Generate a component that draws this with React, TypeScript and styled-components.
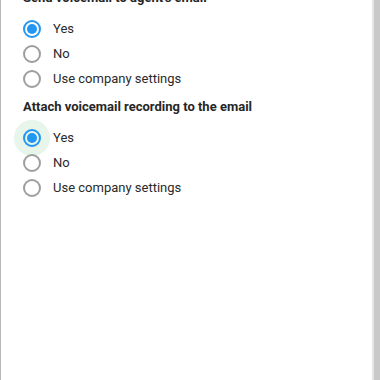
import styled, { createGlobalStyle } from "styled-components";

const Global = createGlobalStyle`
  html, body { margin: 0; padding: 0; background: #fff; }
  body { font-family: Roboto, "Noto Sans", Arial, sans-serif; }
`;

const Page = styled.div`
  width: 380px;
  height: 380px;
  display: flex;
  overflow: hidden;
  background: #fff;
`;

const Panel = styled.div`
  flex: 1;
  border-left: 1px solid #b8b8b8;
  overflow: hidden;
`;

const Rail = styled.div`
  width: 6px;
  background: #c9c9c9;
  border-left: 2px solid #e6e6e6;
`;

const Content = styled.div`
  position: relative;
  z-index: 0;
  margin-top: -10px;
  padding-left: 22px;
  display: flex;
  flex-direction: column;
  gap: 8px;
`;

const Section = styled.div`
  display: flex;
  flex-direction: column;
`;

const Heading = styled.div`
  font-size: 13px;
  line-height: 16px;
  font-weight: 700;
  color: #262626;
  margin-bottom: 10px;
`;

const Row = styled.label`
  height: 25px;
  display: flex;
  align-items: center;
  gap: 12px;
  font-size: 13px;
  color: #2a2a2a;
  cursor: pointer;
`;

const Circle = styled.span<{ $on: boolean; $focus?: boolean }>`
  position: relative;
  width: 18px;
  height: 18px;
  box-sizing: border-box;
  border-radius: 50%;
  border: 2px solid ${(p) => (p.$on ? "#2196f3" : "#9e9e9e")};
  display: flex;
  align-items: center;
  justify-content: center;
  flex-shrink: 0;

  &::before {
    content: "";
    display: ${(p) => (p.$focus ? "block" : "none")};
    position: absolute;
    left: 50%;
    top: 50%;
    width: 36px;
    height: 36px;
    margin: -18px 0 0 -18px;
    border-radius: 50%;
    background: #e7f5ea;
    z-index: -1;
  }

  &::after {
    content: "";
    display: ${(p) => (p.$on ? "block" : "none")};
    width: 10px;
    height: 10px;
    border-radius: 50%;
    background: #2196f3;
  }
`;

const Label = styled.span`
  line-height: 16px;
`;

const options = ["Yes", "No", "Use company settings"];

function Group({ title, focus }: { title: string; focus?: boolean }) {
  return (
    <Section>
      <Heading>{title}</Heading>
      {options.map((o, i) => (
        <Row key={o}>
          <Circle $on={i === 0} $focus={focus && i === 0} />
          <Label>{o}</Label>
        </Row>
      ))}
    </Section>
  );
}

export default function App() {
  return (
    <Page>
      <Global />
      <Panel>
        <Content>
          <Group title="Send voicemail to agent's email" />
          <Group title="Attach voicemail recording to the email" focus />
        </Content>
      </Panel>
      <Rail />
    </Page>
  );
}
